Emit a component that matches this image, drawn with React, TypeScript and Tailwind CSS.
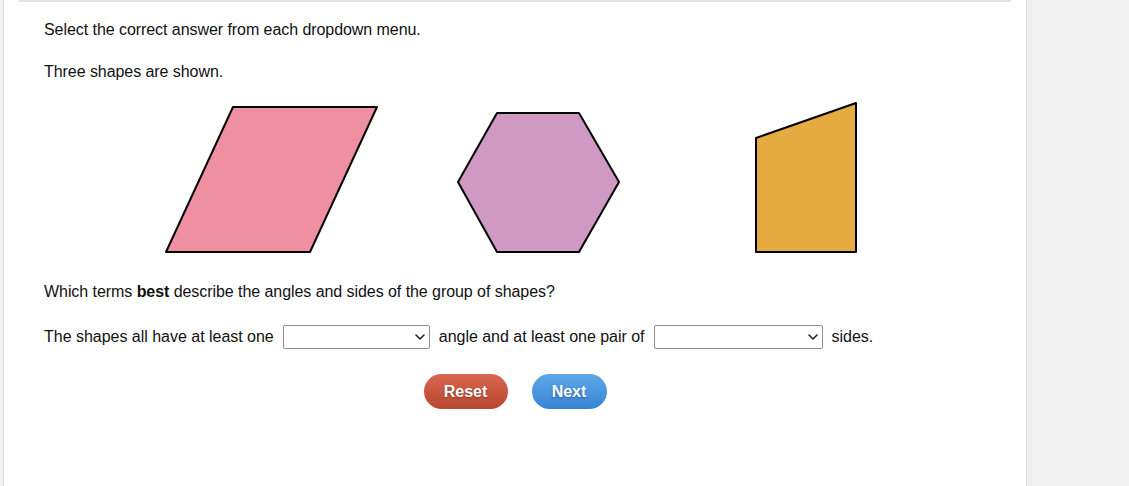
import { ChevronDown } from "lucide-react";

function Dropdown({ width }: { width: string }) {
  return (
    <span className={`relative inline-block h-6 ${width}`}>
      <select className="h-6 w-full appearance-none rounded-[2px] border border-[#8f8f8f] bg-white pl-1 pr-5 text-[13px]">
        <option value=""></option>
      </select>
      <ChevronDown
        className="pointer-events-none absolute right-[2px] top-[4px] h-4 w-4 text-[#222]"
        strokeWidth={2.4}
      />
    </span>
  );
}

function Shapes() {
  return (
    <div className="mt-5 flex items-start">
      <svg width="215" height="153" viewBox="164 101 215 153" className="ml-[120px] block">
        <polygon
          points="233,107 377,107 310,252 166,252"
          fill="#ef90a2"
          stroke="#000"
          strokeWidth="2"
          strokeLinejoin="round"
        />
      </svg>
      <svg width="165" height="153" viewBox="456 101 165 153" className="ml-[77px] block">
        <polygon
          points="497,113 579,113 619,182 579,252 497,252 458,182"
          fill="#cf99c4"
          stroke="#000"
          strokeWidth="2"
          strokeLinejoin="round"
        />
      </svg>
      <svg width="104" height="153" viewBox="754 101 104 153" className="ml-[133px] block">
        <polygon
          points="756,138 856,103 856,252 756,252"
          fill="#e5aa40"
          stroke="#000"
          strokeWidth="2"
          strokeLinejoin="round"
        />
      </svg>
    </div>
  );
}

export default function App() {
  return (
    <div className="flex h-[486px] w-[1129px] overflow-hidden bg-[#f0f0f0] font-['Liberation_Sans',Arial,sans-serif] text-[16px] leading-[18px] tracking-[-0.06px] text-[#111]">
      <div className="ml-[3px] h-full w-[1024px] border-x border-[#dcdcdc] bg-white">
        <div className="mx-[15px] h-[2px] bg-[#e2e2e2]" />
        <div className="pl-10 pt-[19px]">
          <p>Select the correct answer from each dropdown menu.</p>
          <p className="mt-[24px]">Three shapes are shown.</p>
          <Shapes />
          <p className="mt-[29px]">
            Which terms <b>best</b> describe the angles and sides of the group of shapes?
          </p>
          <div className="mt-[24px] flex h-6 items-center gap-[9px] tracking-[-0.02px]">
            <span>The shapes all have at least one</span>
            <Dropdown width="w-[147px]" />
            <span>angle and at least one pair of</span>
            <Dropdown width="w-[169px]" />
            <span>sides.</span>
          </div>
        </div>
        <div className="mt-[25px] flex justify-center gap-6">
          <button className="h-[35px] w-[84px] rounded-full bg-gradient-to-b from-[#d96650] to-[#b8472f] text-[16px] font-bold tracking-normal text-white [text-shadow:0_1px_2px_rgba(0,0,0,0.35)]">
            Reset
          </button>
          <button className="h-[35px] w-[75px] rounded-full bg-gradient-to-b from-[#5fa8e6] to-[#3683d5] text-[16px] font-bold tracking-normal text-white [text-shadow:0_1px_2px_rgba(0,0,0,0.35)]">
            Next
          </button>
        </div>
      </div>
    </div>
  );
}
